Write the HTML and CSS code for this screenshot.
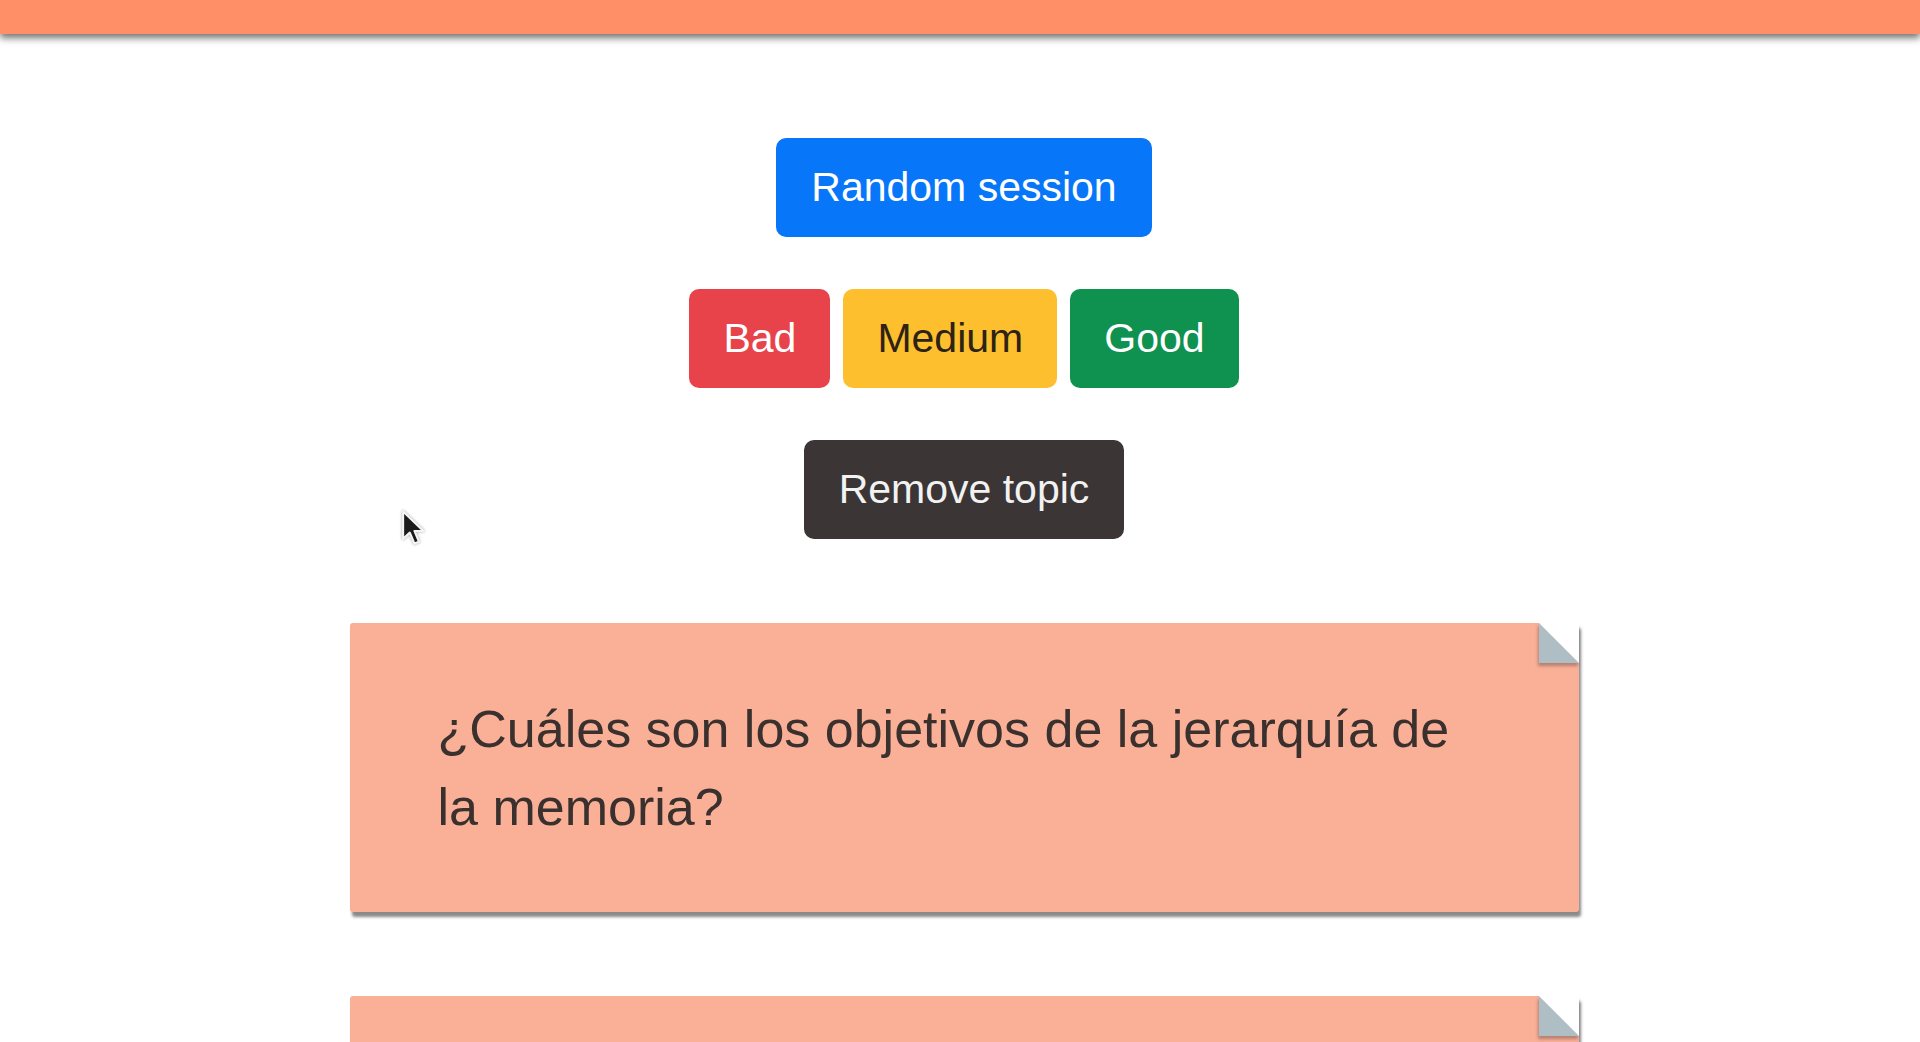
FILE: index.html
```html
<!DOCTYPE html>
<html lang="es">
<head>
<meta charset="utf-8">
<title>Random session</title>
<link rel="stylesheet" href="styles.css">
</head>
<body>
<header class="topbar"></header>
<main class="content">
  <section class="actions">
    <button class="btn btn-primary">Random session</button>
    <div class="rating">
      <button class="btn btn-danger">Bad</button>
      <button class="btn btn-warning">Medium</button>
      <button class="btn btn-success">Good</button>
    </div>
    <button class="btn btn-dark">Remove topic</button>
  </section>
  <section class="notes">
    <article class="note">
      <p class="note-text">¿Cuáles son los objetivos de la jerarquía de la memoria?</p>
    </article>
    <article class="note note-empty"></article>
  </section>
</main>
<svg class="cursor" width="28" height="40" viewBox="0 0 20 28" aria-hidden="true">
  <path d="M1.5 1.5 L1.5 21 L6.3 16.6 L9.6 24.4 L12.8 23 L9.6 15.4 L16 15.4 Z" fill="#1a1a1a" stroke="#f4f4f4" stroke-width="1.5" stroke-linejoin="round"/>
</svg>
</body>
</html>
```
FILE: styles.css
```css
html, body {
  margin: 0;
  padding: 0;
  background: #ffffff;
}

body {
  position: relative;
  font-family: "Liberation Sans", Arial, Helvetica, sans-serif;
  overflow: hidden;
  height: 1042px;
}

.topbar {
  height: 34px;
  background: #ff8f66;
  box-shadow: 0 4px 7px rgba(40, 40, 40, 0.65);
  position: relative;
  z-index: 2;
}

.content {
  padding: 104px 0 0 8px;
  display: flex;
  flex-direction: column;
  align-items: center;
}

.actions {
  display: flex;
  flex-direction: column;
  align-items: center;
  gap: 52px;
}

.rating {
  display: flex;
  gap: 13px;
}

.btn {
  font-family: "Liberation Sans", Arial, Helvetica, sans-serif;
  font-size: 41px;
  line-height: 61px;
  padding: 19px 34px;
  border: none;
  border-radius: 10px;
  color: #ffffff;
  cursor: pointer;
}

.btn-primary { background: #0776f8; padding: 19px 35px; }
.btn-danger { background: #e8434a; }
.btn-warning { background: #fdbf2d; color: #2c2216; }
.btn-success { background: #0f9150; }
.btn-dark { background: #3b3536; color: #f2f2f2; padding: 19px 35px; }

.notes {
  margin-top: 84px;
  display: flex;
  flex-direction: column;
  align-items: center;
  gap: 84px;
}

.note {
  position: relative;
  box-sizing: border-box;
  width: 1229px;
  padding: 67px 88px 66px;
  background: #f9b097;
  border-radius: 3px;
  box-shadow: 2px 5px 3px rgba(60, 60, 60, 0.6);
}

.note-empty {
  min-height: 290px;
}

.note::before {
  content: "";
  position: absolute;
  top: 0;
  right: 0;
  width: 0;
  height: 0;
  border-style: solid;
  border-width: 0 40px 40px 0;
  border-color: #ffffff #ffffff #afbdc4 #afbdc4;
  box-shadow: -1px 3px 3px rgba(60, 40, 40, 0.35);
}

.note-text {
  margin: 0;
  font-size: 52px;
  line-height: 78px;
  color: #3a302e;
}

.cursor {
  position: absolute;
  left: 401px;
  top: 509px;
  filter: drop-shadow(0 0 1.5px rgba(0, 0, 0, 0.35));
}
```
